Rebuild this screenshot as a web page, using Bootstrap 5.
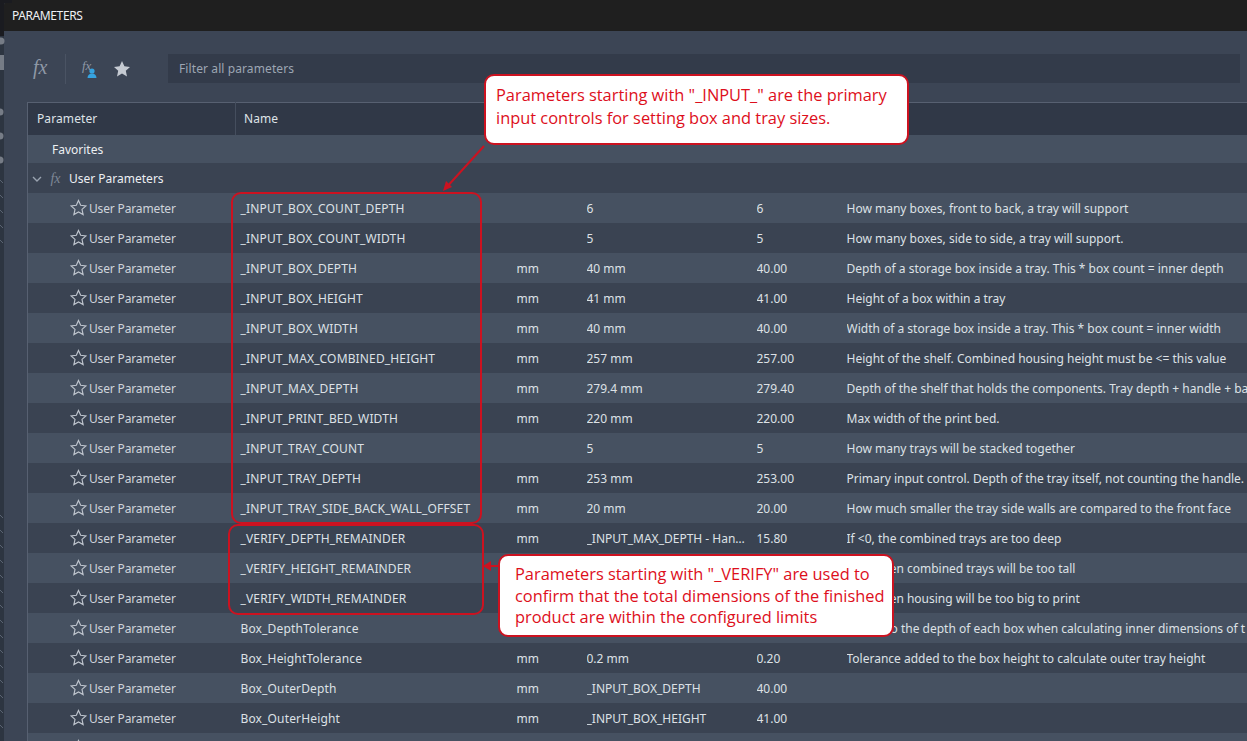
<!DOCTYPE html>
<html lang="en">
<head>
<meta charset="utf-8">
<title>Parameters</title>
<link href="https://cdn.jsdelivr.net/npm/bootstrap@5.3.0/dist/css/bootstrap.min.css" rel="stylesheet">
<style>
html,body{height:100%;overflow:hidden}
body{background:#2d3541;font-family:"Noto Sans","Open Sans",sans-serif;font-size:12px;color:#e4e7ec;position:relative}
.pm-window{margin-left:4px;height:741px;background:#3c4555;border-top-left-radius:5px;overflow:hidden}
.pm-title{height:31px;background:#1f1f1f;color:#eef0f2;padding-left:8px;font-size:12px;letter-spacing:-.4px}
.pm-tools{height:71px;padding:4px 7px 0 29px}
.pm-fx{font-family:"Liberation Serif",serif;font-style:italic;color:#8f98a6;font-size:20px;width:26px;line-height:1}
.pm-tools>.pm-fx{margin-bottom:3px}
.pm-sep{width:1px;height:30px;background:#4a5363;margin:0 15px 0 6px}
.pm-filter{flex:1;height:29px;background:#333b4a;color:#9da6b3;padding-left:11px;margin-left:37px;letter-spacing:.1px}
.pm-table{margin-left:23px;width:1300px;table-layout:fixed;border-collapse:collapse;--bs-table-bg:transparent;--bs-table-color:#e4e7ec;margin-bottom:0;border-top:1px solid #576071;border-left:1px solid #576071}
.pm-table td,.pm-table th{border:0;padding:2px 0 0;height:30px;white-space:nowrap;overflow:hidden;vertical-align:middle;font-weight:400;font-size:12px;letter-spacing:0;color:#dde1e6;box-shadow:none}
.pm-table th{height:32px;padding-top:0;background:#303847;color:#dfe3e8;letter-spacing:.1px}
.pm-table th.pm-hname{border-left:1px solid #454e5e;padding-left:8px}
.pm-table th:first-child{padding-left:9px}
.pm-table tr.pm-light td{background:#465161}
.pm-table tr.pm-dark td{background:#3a4352}
.pm-table tr.pm-fav td{height:28px;background:#465161;padding-left:24px;color:#eceff2}
.pm-table tr.pm-group td{height:30px;background:#3a4352;color:#eceff2}
.pm-table td.pm-c1{padding-left:42px;color:#cfd4db;letter-spacing:-.15px}
.pm-table td.pm-c2{padding-left:5px;letter-spacing:.15px}
.pm-star{width:17px;height:17px;vertical-align:-3px;margin-right:2px;margin-top:-5px}
.pm-over{position:absolute;left:0;top:0;pointer-events:none}
.pm-box{position:absolute;border:2px solid #cc1220;border-radius:10px}
.pm-call{position:absolute;background:#fff;border:2px solid #cc1220;border-radius:10px;color:#dd0f1c;font-family:"Open Sans","Noto Sans",sans-serif;font-size:16.4px}
.pm-call-a{left:484px;top:74px;width:425px;height:71px;padding:7px 0 0 10px;line-height:23px}
.pm-call-b{left:498px;top:554px;width:396px;height:83px;padding:7px 0 0 15px;line-height:21.500px}
</style>
</head>
<body>
<div class="pm-window">
  <div class="pm-title d-flex align-items-center">PARAMETERS</div>
  <div class="pm-tools d-flex align-items-center">
    <span class="pm-fx">fx</span>
    <span class="pm-sep"></span>
    <svg width="20" height="20" viewBox="0 0 20 20" class="me-2"><text x="1" y="11" font-family="Liberation Serif" font-style="italic" font-size="13" fill="#8f98a6">fx</text><circle cx="11" cy="12" r="2.600" fill="#36a3e0"/><path d="M6.500 19c0-3 2-4.500 4.500-4.500s4.500 1.500 4.500 4.500z" fill="#36a3e0"/></svg>
    <svg width="18" height="18" viewBox="0 0 18 18" class="ms-1"><path d="M9 1l2.400 5.300 5.600.6-4.200 3.800 1.200 5.700L9 13.500 4 16.400l1.200-5.700L1 6.900l5.600-.6z" fill="#c5cad2"/></svg>
    <div class="pm-filter d-flex align-items-center">Filter all parameters</div>
  </div>
  <table class="table pm-table" id="t">
    <colgroup><col style="width:208px"><col style="width:281px"><col style="width:70px"><col style="width:170px"><col style="width:90px"><col></colgroup>
    <thead><tr><th>Parameter</th><th class="pm-hname">Name</th><th></th><th></th><th></th><th>Comments</th></tr></thead>
    <tbody>
      <tr class="pm-fav"><td colspan="6">Favorites</td></tr>
      <tr class="pm-group"><td colspan="6"><svg width="10" height="8" viewBox="0 0 10 8" class="ms-1"><path d="M1 2l4 4 4-4" fill="none" stroke="#9aa3b0" stroke-width="1.400"/></svg><span class="pm-fx d-inline-block text-center" style="width:27px;font-size:14px;color:#7f8897">fx</span>User Parameters</td></tr>
      <tr class="pm-light"><td class="pm-c1"><svg class="pm-star" viewBox="0 0 18 18"><path d="M9 1.500l2.300 5.200 5.600.6-4.200 3.700 1.200 5.500L9 13.700 4.100 16.500l1.200-5.500L1.100 7.300l5.600-.6z" fill="none" stroke="#bfc5ce" stroke-width="1.200"/></svg>User Parameter</td><td class="pm-c2">_INPUT_BOX_COUNT_DEPTH</td><td></td><td>6</td><td>6</td><td>How many boxes, front to back, a tray will support</td></tr>
      <tr class="pm-dark"><td class="pm-c1"><svg class="pm-star" viewBox="0 0 18 18"><path d="M9 1.500l2.300 5.200 5.600.6-4.200 3.700 1.200 5.500L9 13.700 4.100 16.500l1.200-5.500L1.100 7.300l5.600-.6z" fill="none" stroke="#bfc5ce" stroke-width="1.200"/></svg>User Parameter</td><td class="pm-c2">_INPUT_BOX_COUNT_WIDTH</td><td></td><td>5</td><td>5</td><td>How many boxes, side to side, a tray will support.</td></tr>
      <tr class="pm-light"><td class="pm-c1"><svg class="pm-star" viewBox="0 0 18 18"><path d="M9 1.500l2.300 5.200 5.600.6-4.200 3.700 1.200 5.500L9 13.700 4.100 16.500l1.200-5.500L1.100 7.300l5.600-.6z" fill="none" stroke="#bfc5ce" stroke-width="1.200"/></svg>User Parameter</td><td class="pm-c2">_INPUT_BOX_DEPTH</td><td>mm</td><td>40 mm</td><td>40.00</td><td>Depth of a storage box inside a tray. This * box count = inner depth</td></tr>
      <tr class="pm-dark"><td class="pm-c1"><svg class="pm-star" viewBox="0 0 18 18"><path d="M9 1.500l2.300 5.200 5.600.6-4.200 3.700 1.200 5.500L9 13.700 4.100 16.500l1.200-5.500L1.100 7.300l5.600-.6z" fill="none" stroke="#bfc5ce" stroke-width="1.200"/></svg>User Parameter</td><td class="pm-c2">_INPUT_BOX_HEIGHT</td><td>mm</td><td>41 mm</td><td>41.00</td><td>Height of a box within a tray</td></tr>
      <tr class="pm-light"><td class="pm-c1"><svg class="pm-star" viewBox="0 0 18 18"><path d="M9 1.500l2.300 5.200 5.600.6-4.200 3.700 1.200 5.500L9 13.700 4.100 16.500l1.200-5.500L1.100 7.300l5.600-.6z" fill="none" stroke="#bfc5ce" stroke-width="1.200"/></svg>User Parameter</td><td class="pm-c2">_INPUT_BOX_WIDTH</td><td>mm</td><td>40 mm</td><td>40.00</td><td>Width of a storage box inside a tray. This * box count = inner width</td></tr>
      <tr class="pm-dark"><td class="pm-c1"><svg class="pm-star" viewBox="0 0 18 18"><path d="M9 1.500l2.300 5.200 5.600.6-4.200 3.700 1.200 5.500L9 13.700 4.100 16.500l1.200-5.500L1.100 7.300l5.600-.6z" fill="none" stroke="#bfc5ce" stroke-width="1.200"/></svg>User Parameter</td><td class="pm-c2">_INPUT_MAX_COMBINED_HEIGHT</td><td>mm</td><td>257 mm</td><td>257.00</td><td>Height of the shelf. Combined housing height must be &lt;= this value</td></tr>
      <tr class="pm-light"><td class="pm-c1"><svg class="pm-star" viewBox="0 0 18 18"><path d="M9 1.500l2.300 5.200 5.600.6-4.200 3.700 1.200 5.500L9 13.700 4.100 16.500l1.200-5.500L1.100 7.300l5.600-.6z" fill="none" stroke="#bfc5ce" stroke-width="1.200"/></svg>User Parameter</td><td class="pm-c2">_INPUT_MAX_DEPTH</td><td>mm</td><td>279.4 mm</td><td>279.40</td><td>Depth of the shelf that holds the components. Tray depth + handle + ba</td></tr>
      <tr class="pm-dark"><td class="pm-c1"><svg class="pm-star" viewBox="0 0 18 18"><path d="M9 1.500l2.300 5.200 5.600.6-4.200 3.700 1.200 5.500L9 13.700 4.100 16.500l1.200-5.500L1.100 7.300l5.600-.6z" fill="none" stroke="#bfc5ce" stroke-width="1.200"/></svg>User Parameter</td><td class="pm-c2">_INPUT_PRINT_BED_WIDTH</td><td>mm</td><td>220 mm</td><td>220.00</td><td>Max width of the print bed.</td></tr>
      <tr class="pm-light"><td class="pm-c1"><svg class="pm-star" viewBox="0 0 18 18"><path d="M9 1.500l2.300 5.200 5.600.6-4.200 3.700 1.200 5.500L9 13.700 4.100 16.500l1.200-5.500L1.100 7.300l5.600-.6z" fill="none" stroke="#bfc5ce" stroke-width="1.200"/></svg>User Parameter</td><td class="pm-c2">_INPUT_TRAY_COUNT</td><td></td><td>5</td><td>5</td><td>How many trays will be stacked together</td></tr>
      <tr class="pm-dark"><td class="pm-c1"><svg class="pm-star" viewBox="0 0 18 18"><path d="M9 1.500l2.300 5.200 5.600.6-4.200 3.700 1.200 5.500L9 13.700 4.100 16.500l1.200-5.500L1.100 7.300l5.600-.6z" fill="none" stroke="#bfc5ce" stroke-width="1.200"/></svg>User Parameter</td><td class="pm-c2">_INPUT_TRAY_DEPTH</td><td>mm</td><td>253 mm</td><td>253.00</td><td>Primary input control. Depth of the tray itself, not counting the handle.</td></tr>
      <tr class="pm-light"><td class="pm-c1"><svg class="pm-star" viewBox="0 0 18 18"><path d="M9 1.500l2.300 5.200 5.600.6-4.200 3.700 1.200 5.500L9 13.700 4.100 16.500l1.200-5.500L1.100 7.300l5.600-.6z" fill="none" stroke="#bfc5ce" stroke-width="1.200"/></svg>User Parameter</td><td class="pm-c2">_INPUT_TRAY_SIDE_BACK_WALL_OFFSET</td><td>mm</td><td>20 mm</td><td>20.00</td><td>How much smaller the tray side walls are compared to the front face</td></tr>
      <tr class="pm-dark"><td class="pm-c1"><svg class="pm-star" viewBox="0 0 18 18"><path d="M9 1.500l2.300 5.200 5.600.6-4.200 3.700 1.200 5.500L9 13.700 4.100 16.500l1.200-5.500L1.100 7.300l5.600-.6z" fill="none" stroke="#bfc5ce" stroke-width="1.200"/></svg>User Parameter</td><td class="pm-c2">_VERIFY_DEPTH_REMAINDER</td><td>mm</td><td>_INPUT_MAX_DEPTH - Han…</td><td>15.80</td><td>If &lt;0, the combined trays are too deep</td></tr>
      <tr class="pm-light"><td class="pm-c1"><svg class="pm-star" viewBox="0 0 18 18"><path d="M9 1.500l2.300 5.200 5.600.6-4.200 3.700 1.200 5.500L9 13.700 4.100 16.500l1.200-5.500L1.100 7.300l5.600-.6z" fill="none" stroke="#bfc5ce" stroke-width="1.200"/></svg>User Parameter</td><td class="pm-c2">_VERIFY_HEIGHT_REMAINDER</td><td></td><td></td><td></td><td>If &lt;0, then combined trays will be too tall</td></tr>
      <tr class="pm-dark"><td class="pm-c1"><svg class="pm-star" viewBox="0 0 18 18"><path d="M9 1.500l2.300 5.200 5.600.6-4.200 3.700 1.200 5.500L9 13.700 4.100 16.500l1.200-5.500L1.100 7.300l5.600-.6z" fill="none" stroke="#bfc5ce" stroke-width="1.200"/></svg>User Parameter</td><td class="pm-c2">_VERIFY_WIDTH_REMAINDER</td><td></td><td></td><td></td><td>If &lt;0, then housing will be too big to print</td></tr>
      <tr class="pm-light"><td class="pm-c1"><svg class="pm-star" viewBox="0 0 18 18"><path d="M9 1.500l2.300 5.200 5.600.6-4.200 3.700 1.200 5.500L9 13.700 4.100 16.500l1.200-5.500L1.100 7.300l5.600-.6z" fill="none" stroke="#bfc5ce" stroke-width="1.200"/></svg>User Parameter</td><td class="pm-c2">Box_DepthTolerance</td><td></td><td></td><td></td><td>Added to the depth of each box when calculating inner dimensions of t</td></tr>
      <tr class="pm-dark"><td class="pm-c1"><svg class="pm-star" viewBox="0 0 18 18"><path d="M9 1.500l2.300 5.200 5.600.6-4.200 3.700 1.200 5.500L9 13.700 4.100 16.500l1.200-5.500L1.100 7.300l5.600-.6z" fill="none" stroke="#bfc5ce" stroke-width="1.200"/></svg>User Parameter</td><td class="pm-c2">Box_HeightTolerance</td><td>mm</td><td>0.2 mm</td><td>0.20</td><td>Tolerance added to the box height to calculate outer tray height</td></tr>
      <tr class="pm-light"><td class="pm-c1"><svg class="pm-star" viewBox="0 0 18 18"><path d="M9 1.500l2.300 5.200 5.600.6-4.200 3.700 1.200 5.500L9 13.700 4.100 16.500l1.200-5.500L1.100 7.300l5.600-.6z" fill="none" stroke="#bfc5ce" stroke-width="1.200"/></svg>User Parameter</td><td class="pm-c2">Box_OuterDepth</td><td>mm</td><td>_INPUT_BOX_DEPTH</td><td>40.00</td><td></td></tr>
      <tr class="pm-dark"><td class="pm-c1"><svg class="pm-star" viewBox="0 0 18 18"><path d="M9 1.500l2.300 5.200 5.600.6-4.200 3.700 1.200 5.500L9 13.700 4.100 16.500l1.200-5.500L1.100 7.300l5.600-.6z" fill="none" stroke="#bfc5ce" stroke-width="1.200"/></svg>User Parameter</td><td class="pm-c2">Box_OuterHeight</td><td>mm</td><td>_INPUT_BOX_HEIGHT</td><td>41.00</td><td></td></tr>
      <tr class="pm-light"><td class="pm-c1"><svg class="pm-star" viewBox="0 0 18 18"><path d="M9 1.500l2.300 5.200 5.600.6-4.200 3.700 1.200 5.500L9 13.700 4.100 16.500l1.200-5.500L1.100 7.300l5.600-.6z" fill="none" stroke="#bfc5ce" stroke-width="1.200"/></svg></td><td colspan="5"></td></tr>
    </tbody>
  </table>
</div>
<div class="pm-box" style="left:231px;top:192px;width:251px;height:332px"></div>
<div class="pm-box" style="left:228px;top:524px;width:256px;height:91px"></div>
<div class="pm-call pm-call-a">Parameters starting with "_INPUT_" are the primary<br>input controls for setting box and tray sizes.</div>
<div class="pm-call pm-call-b">Parameters starting with "_VERIFY" are used to<br>confirm that the total dimensions of the finished<br>product are within the configured limits</div>
<svg class="pm-over" width="1247" height="741" viewBox="0 0 1247 741"><path d="M0 0H12V3H4V36H0z" fill="#1a1b20"/><g fill="#767c86"><circle cx="1" cy="41" r="3.500"/><rect x="0" y="55" width="4" height="15"/><circle cx="0" cy="112" r="3.500"/><circle cx="0" cy="136" r="3.500"/><circle cx="0" cy="160" r="3.500"/></g><g stroke="#5a6472" fill="none"><path d="M0 180l3 3M0 195l3 3M0 210l3 3M0 225l3 3M0 240l3 3M0 515l3 3M0 530l3 3M0 545l3 3M0 560l3 3M0 575l3 3M0 590l3 3M0 605l3 3M0 620l3 3M0 635l3 3M0 650l3 3M0 665l3 3M0 680l3 3M0 695l3 3M0 710l3 3M0 725l3 3"/></g><path d="M484 146L445 189" stroke="#cc1220" stroke-width="2" fill="none"/><path d="M443 191l3-10 6 6z" fill="#cc1220"/><path d="M498 566H485" stroke="#cc1220" stroke-width="2" fill="none"/><path d="M483 566l8-5v10z" fill="#cc1220"/></svg>
</body>
</html>
